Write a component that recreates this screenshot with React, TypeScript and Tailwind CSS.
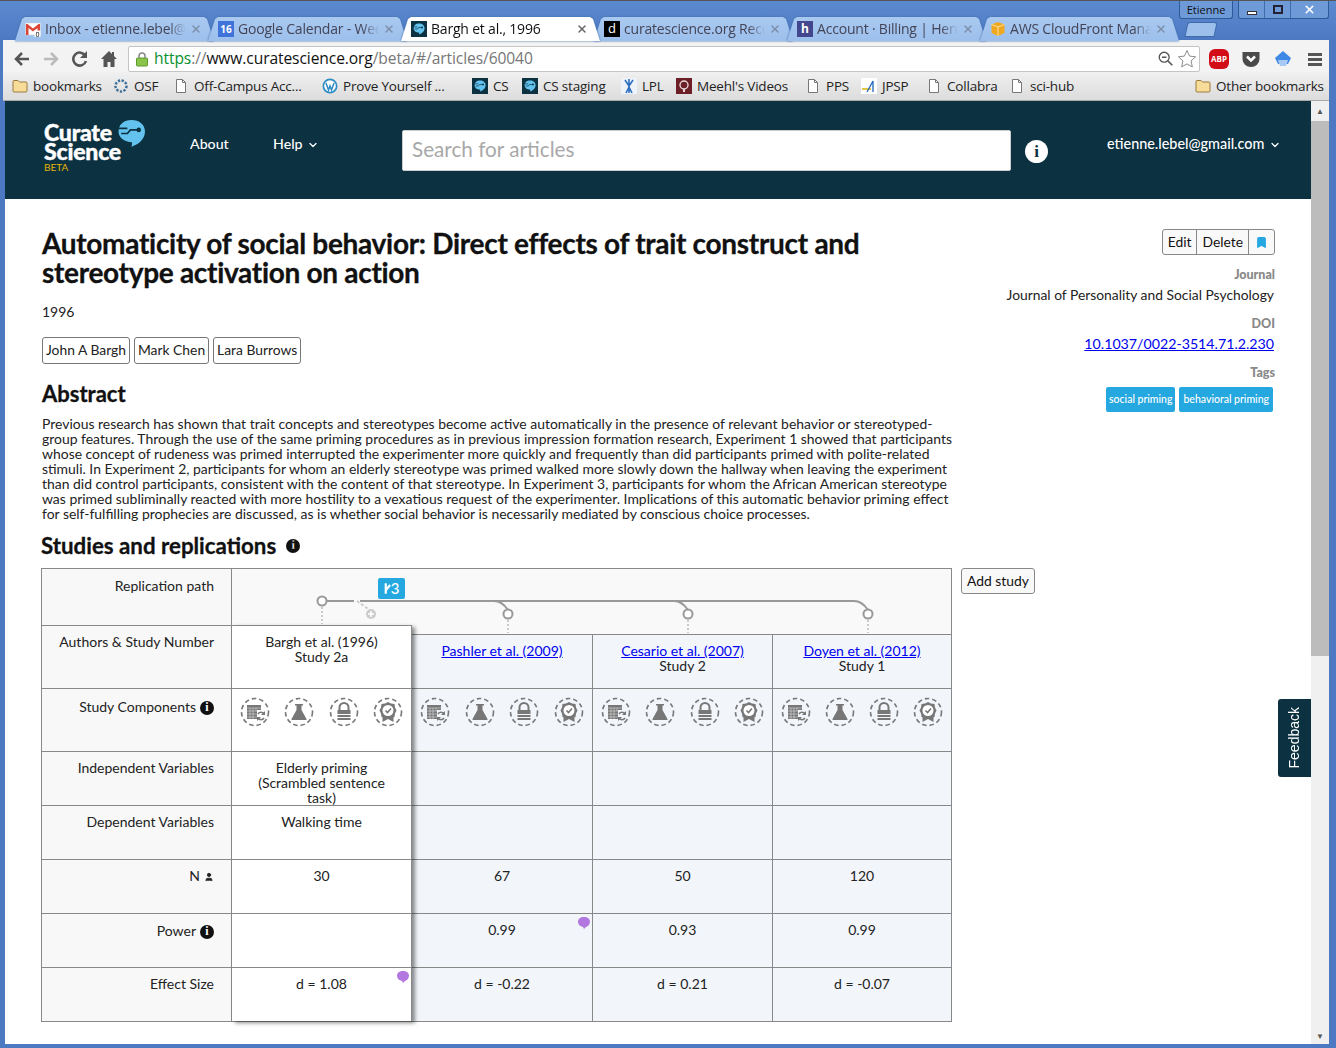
import { Bookmark, ChevronDown, User, X } from "lucide-react";

const font = "font-['Lato','Noto_Sans',sans-serif]";
const chrome = "font-['Open_Sans','Noto_Sans',sans-serif]";

function CsBubble({ className = "" }: { className?: string }) {
  return (
    <svg viewBox="0 0 28 28" className={className}>
      <path d="M14 1c7.5 0 13 4.5 13 11 0 5-3 9-7 12-1.500 1-4 2-6 3 .5-1.500.5-3 .5-4.500C7 22 1.500 18 1.500 12 1.500 5.500 6.500 1 14 1z" fill="#63c3ee" />
      <path d="M1 9h9M4 14h6l3-3.500h8" stroke="#0c3141" strokeWidth="1.600" fill="none" />
      <circle cx="21" cy="10.500" r="2.200" fill="#0c3141" />
    </svg>
  );
}

function TabIcon({ kind }: { kind: string }) {
  if (kind === "gmail")
    return (
      <svg viewBox="0 0 16 16" className="w-4 h-4 shrink-0">
        <rect x="0.500" y="2" width="15" height="12" fill="#fff" stroke="#ccc" strokeWidth="0.500" />
        <path d="M1 3v11h2.500V7L8 10.500 12.500 7v7H15V3h-1.500L8 7.500 2.500 3z" fill="#db4437" />
        <rect x="9.500" y="9.500" width="6" height="6.500" fill="#fff" />
        <text x="12.500" y="15.500" fontSize="7" textAnchor="middle" fill="#000">0</text>
      </svg>
    );
  if (kind === "cal")
    return (
      <div className="w-4 h-4 shrink-0 bg-[#3f73d9] text-white text-[10px] leading-[17px] font-bold text-center">16</div>
    );
  if (kind === "cs")
    return (
      <div className="w-4 h-4 shrink-0 bg-[#0c3141] flex items-center justify-center">
        <CsBubble className="w-3 h-3" />
      </div>
    );
  if (kind === "d")
    return <div className="w-4 h-4 shrink-0 bg-black text-white text-[13px] leading-[14px] text-center">d</div>;
  if (kind === "heroku")
    return <div className="w-4 h-4 shrink-0 bg-[#43488e] text-white text-[12px] leading-[15px] font-bold text-center">h</div>;
  return (
    <svg viewBox="0 0 16 16" className="w-4 h-4 shrink-0">
      <path d="M8 1l6.500 2.500V12L8 15l-6.500-3V3.500z" fill="#f0a91f" />
      <path d="M1.500 3.500L8 6l6.500-2.500M8 6v9" stroke="#fbe0a4" strokeWidth="1" fill="none" />
    </svg>
  );
}

const tabs = [
  { icon: "gmail", label: "Inbox - etienne.lebel@gmail.com" },
  { icon: "cal", label: "Google Calendar - Week of" },
  { icon: "cs", label: "Bargh et al., 1996", active: true },
  { icon: "d", label: "curatescience.org Records" },
  { icon: "heroku", label: "Account · Billing | Heroku" },
  { icon: "aws", label: "AWS CloudFront Management" },
];

function Tab({ icon, label, active }: { icon: string; label: string; active?: boolean }) {
  return (
    <div className={`relative w-[205px] -mr-[12px] h-[24px] shrink-0 ${active ? "z-10" : ""} [filter:drop-shadow(0_0_1px_#3f6bab)]`}>
      <div
        className={`h-full flex items-center pl-[13px] pr-[15px] gap-[4px] [clip-path:polygon(0_100%,3px_100%,10px_2px,13px_0,calc(100%-13px)_0,calc(100%-10px)_2px,calc(100%-3px)_100%,100%_100%)] ${
          active ? "bg-white text-[#111]" : "bg-gradient-to-b from-[#a9c9f0] to-[#9cbfec] text-[#445]"
        }`}
      >
        <TabIcon kind={icon} />
        <span className="flex-1 overflow-hidden whitespace-nowrap text-[14px] leading-[24px] tracking-[-0.2px] [mask-image:linear-gradient(to_right,black_88%,transparent)]">
          {label}
        </span>
        <X size={12} strokeWidth={3} className={active ? "text-[#666] shrink-0" : "text-[#7d8fa8] shrink-0"} />
      </div>
    </div>
  );
}

function DocIcon() {
  return (
    <svg viewBox="0 0 16 16" className="w-4 h-4 shrink-0">
      <path d="M3.500 1.500h6l3 3v10h-9z" fill="#fff" stroke="#777" />
      <path d="M9.500 1.500v3h3" fill="none" stroke="#777" />
    </svg>
  );
}

function FolderIcon() {
  return (
    <svg viewBox="0 0 16 16" className="w-4 h-4 shrink-0">
      <path d="M1 3.500c0-.6.4-1 1-1h4l1.500 1.500H14c.6 0 1 .4 1 1v8c0 .6-.4 1-1 1H2c-.6 0-1-.4-1-1z" fill="#f8dc9a" stroke="#9a7b3d" />
    </svg>
  );
}

function BookmarkIcon({ kind }: { kind: string }) {
  if (kind === "folder") return <FolderIcon />;
  if (kind === "doc") return <DocIcon />;
  if (kind === "cs") return <TabIcon kind="cs" />;
  if (kind === "osf")
    return (
      <svg viewBox="0 0 16 16" className="w-4 h-4 shrink-0">
        <circle cx="8" cy="8" r="5.500" fill="none" stroke="#3b6d96" strokeWidth="2.500" strokeDasharray="2.200 1.500" />
      </svg>
    );
  if (kind === "wp")
    return (
      <svg viewBox="0 0 16 16" className="w-4 h-4 shrink-0">
        <circle cx="8" cy="8" r="7.500" fill="#2d8cc4" />
        <circle cx="8" cy="8" r="5.800" fill="#fff" />
        <path d="M4 5l2.500 7L8 8l1.500 4L12 5" fill="none" stroke="#2d8cc4" strokeWidth="1.500" />
      </svg>
    );
  if (kind === "lpl")
    return (
      <svg viewBox="0 0 16 16" className="w-4 h-4 shrink-0">
        <rect width="16" height="16" fill="#eef3fa" />
        <path d="M8 1v14M4 2l4 6 4-6M5 15l3-6 3 6" stroke="#2e6fc0" strokeWidth="1.600" fill="none" />
      </svg>
    );
  if (kind === "meehl")
    return (
      <svg viewBox="0 0 16 16" className="w-4 h-4 shrink-0">
        <rect width="16" height="16" fill="#6b1f26" />
        <circle cx="8" cy="7" r="4" fill="none" stroke="#e8d6d6" strokeWidth="1.400" />
        <path d="M7 11h2v3H7z" fill="#e8d6d6" />
      </svg>
    );
  return (
    <svg viewBox="0 0 16 16" className="w-4 h-4 shrink-0">
      <rect width="16" height="16" fill="#fff" />
      <path d="M1 11h9" stroke="#e3c642" strokeWidth="2" />
      <path d="M6 14l6-11v11" stroke="#2e6fc0" strokeWidth="1.400" fill="none" />
    </svg>
  );
}

const bookmarks = [
  { icon: "folder", label: "bookmarks", width: "w-[101px]" },
  { icon: "osf", label: "OSF", width: "w-[60px]" },
  { icon: "doc", label: "Off-Campus Acc...", width: "w-[149px]" },
  { icon: "wp", label: "Prove Yourself ...", width: "w-[150px]" },
  { icon: "cs", label: "CS", width: "w-[50px]" },
  { icon: "cs", label: "CS staging", width: "w-[99px]" },
  { icon: "lpl", label: "LPL", width: "w-[55px]" },
  { icon: "meehl", label: "Meehl's Videos", width: "w-[129px]" },
  { icon: "doc", label: "PPS", width: "w-[56px]" },
  { icon: "jpsp", label: "JPSP", width: "w-[65px]" },
  { icon: "doc", label: "Collabra", width: "w-[83px]" },
  { icon: "doc", label: "sci-hub", width: "w-[186px]" },
  { icon: "folder", label: "Other bookmarks", width: "w-[130px]" },
];

function WindowChrome() {
  return (
    <div className={`${chrome} shrink-0`}>
      {/* Tab strip */}
      <div className="relative h-[40px] pt-[16px] pl-[12px] flex bg-gradient-to-b from-[#5c8ad0] to-[#4d79c2] border-t border-[#555]">
        {tabs.map((t) => (
          <Tab key={t.label} {...t} />
        ))}
        <div className="ml-[16px] mt-[5px] w-[30px] h-[15px] bg-[#9cbfec] border border-[#3f6bab] rounded-t-[3px] -skew-x-12" />
        {/* Window controls */}
        <div className="absolute top-0 right-[7px] flex items-start gap-[5px]">
          <div className="w-[54px] h-[18px] border border-t-0 border-[#2f5a98] rounded-b-[3px] bg-[#6e9ad8] text-[11px] leading-[18px] text-[#111] text-center">
            Etienne
          </div>
          <div className="w-[91px] h-[18px] border border-t-0 border-[#2f5a98] rounded-b-[3px] bg-[#6e9ad8] flex">
            <div className="w-[26px] flex items-center justify-center border-r border-[#3f6bab]">
              <div className="w-[10px] h-[4px] mt-[6px] bg-white border border-[#333]" />
            </div>
            <div className="w-[26px] flex items-center justify-center border-r border-[#3f6bab]">
              <div className="w-[10px] h-[9px] bg-transparent border-2 border-[#223]" />
            </div>
            <div className="flex-1 flex items-center justify-center">
              <X size={13} strokeWidth={3} className="text-white" />
            </div>
          </div>
        </div>
      </div>
      {/* Toolbar */}
      <div className="h-[32px] pt-[6px] ml-[3px] mr-[7px] bg-[#f3f3f3] flex items-center">
        <div className="w-[125px] pl-[9px] flex items-center gap-[9px] text-[#555]">
          <svg viewBox="0 0 20 20" className="w-5 h-5">
            <path d="M17 10H5M10 4l-6 6 6 6" stroke="#555" strokeWidth="2.500" fill="none" />
          </svg>
          <svg viewBox="0 0 20 20" className="w-5 h-5">
            <path d="M3 10h12M10 4l6 6-6 6" stroke="#bbb" strokeWidth="2.500" fill="none" />
          </svg>
          <svg viewBox="0 0 20 20" className="w-5 h-5">
            <path d="M15.500 7A6.500 6.500 0 1 0 16 12" stroke="#555" strokeWidth="2.500" fill="none" />
            <path d="M17 2v7h-7z" fill="#555" />
          </svg>
          <svg viewBox="0 0 20 20" className="w-5 h-5">
            <path d="M10 2L2 10h2.500v8h4v-5h3v5h4v-8H18l-3-3V3h-2v2z" fill="#555" />
          </svg>
        </div>
        <div className="w-[1072px] h-[26px] bg-white border border-[#c4c4c4] rounded-[2px] flex items-center pl-[5px] pr-[2px]">
          <svg viewBox="0 0 16 16" className="w-4 h-4 shrink-0">
            <rect x="2.500" y="7" width="11" height="8" rx="1" fill="#8ac44b" stroke="#5f9a2d" />
            <path d="M5 7V5a3 3 0 0 1 6 0v2" stroke="#888" strokeWidth="1.500" fill="none" />
          </svg>
          <div className="ml-[4px] flex-1 text-[15.6px] tracking-[-0.1px] whitespace-nowrap">
            <span className="text-[#0a8f2f]">https</span>
            <span className="text-[#777]">://</span>
            <span className="text-[#111]">www.curatescience.org</span>
            <span className="text-[#777]">/beta/#/articles/60040</span>
          </div>
          <svg viewBox="0 0 20 20" className="w-[18px] h-[18px] shrink-0">
            <circle cx="8" cy="8" r="5.500" stroke="#555" strokeWidth="1.500" fill="none" />
            <path d="M5.500 8h5M12 12l5 5" stroke="#555" strokeWidth="1.800" />
          </svg>
          <svg viewBox="0 0 20 20" className="w-5 h-5 ml-[2px] shrink-0">
            <path d="M10 1.500l2.600 5.600 6 .7-4.500 4.100 1.200 6-5.300-3-5.300 3 1.200-6L1.400 7.800l6-.7z" stroke="#8c8c8c" fill="#fff" />
          </svg>
        </div>
        <div className="flex-1 flex items-center pl-[9px] gap-[12px]">
          <div className="w-5 h-5 rounded-[6px] bg-[#d20d17] text-white text-[8px] font-bold leading-[20px] text-center">ABP</div>
          <svg viewBox="0 0 20 20" className="w-5 h-5">
            <path d="M1.500 3h17v7a8.500 8 0 0 1-17 0z" fill="#4a4a4a" />
            <path d="M6 7.500l4 4 4-4" stroke="#fff" strokeWidth="2.500" fill="none" />
          </svg>
          <svg viewBox="0 0 20 20" className="w-5 h-5">
            <path d="M10 2l8 7-3 6H5L2 9z" fill="#3f88e6" />
            <path d="M5 11h10l-2 6H7z" fill="#a9c9f5" />
          </svg>
          <div className="ml-[3px] w-[14px] flex flex-col gap-[2px]">
            <div className="h-[3px] bg-[#555]" />
            <div className="h-[3px] bg-[#555]" />
            <div className="h-[3px] bg-[#555]" />
          </div>
        </div>
      </div>
      {/* Bookmarks */}
      <div className="h-[29px] ml-[3px] mr-[7px] pl-[9px] bg-gradient-to-b from-[#f0f0f0] to-[#dcdcdc] flex items-center text-[13.5px] text-[#222] border-b border-[#aaa] tracking-[-0.2px]">
        {bookmarks.map((b) => (
          <div key={b.label} className={`${b.width} shrink-0 flex items-center gap-[5px] whitespace-nowrap`}>
            <BookmarkIcon kind={b.icon} />
            <span>{b.label}</span>
          </div>
        ))}
      </div>
    </div>
  );
}

function NavBar() {
  return (
    <header className="h-[98px] bg-[#0c3141] text-white flex items-start pl-[39px] shrink-0">
      <div className="relative w-[146px] h-[90px] pt-[22px]">
        <div className="text-[23px] font-black leading-[19px] tracking-[-0.2px] [-webkit-text-stroke:0.4px_white]">Curate</div>
        <div className="text-[23px] font-black leading-[19px] tracking-[-0.2px] [-webkit-text-stroke:0.4px_white]">Science</div>
        <div className="mt-[1px] text-[10px] leading-[10px] text-[#e3b505]">BETA</div>
        <CsBubble className="absolute left-[73px] top-[18px] w-[29px] h-[29px]" />
      </div>
      <div className="w-[83px] pt-[32px] text-[14.2px] font-medium">About</div>
      <div className="w-[129px] pt-[32px] text-[14.2px] font-medium flex items-start gap-[4px]">
        Help <ChevronDown size={12} strokeWidth={2.500} className="mt-[6px]" />
      </div>
      <div className="mt-[29px] w-[609px] h-[41px] bg-white rounded-[2px] border border-[#ccc] pl-[9px] text-[20.7px] leading-[37px] text-[#a8a8a8]">
        Search for articles
      </div>
      <div className="ml-[14px] mt-[39px] w-[23px] h-[23px] rounded-full bg-white text-[#0c3141] flex items-center justify-center text-[17px] font-black font-['Liberation_Serif',serif]">
        i
      </div>
      <div className="ml-[59px] pt-[32px] text-[14.4px] font-medium flex items-start gap-[5px] whitespace-nowrap">
        etienne.lebel@gmail.com <ChevronDown size={12} strokeWidth={2.500} className="mt-[6px]" />
      </div>
    </header>
  );
}

function RoundInfo() {
  return (
    <span className="inline-flex w-[14px] h-[14px] rounded-full bg-[#111] text-white text-[12px] font-black items-center justify-center font-['Liberation_Serif',serif] align-[1px]">
      i
    </span>
  );
}

function ComponentIcons() {
  const ring = "w-[30px] h-[30px]";
  const dash = { fill: "none", stroke: "#777", strokeWidth: 1.600, strokeDasharray: "4.500 3" };
  return (
    <div className="flex justify-between px-[8px] pt-[8px] w-full">
      <svg viewBox="0 0 30 30" className={ring}>
        <circle cx="15" cy="15" r="13.500" {...dash} />
        <path d="M7 8h14v5h-4v9H7z" fill="#777" />
        <path d="M10 11v11M13 11v11M16 11v3M7 11h14M7 14h10M7 17h10M7 20h10" stroke="#ddd" strokeWidth="0.600" />
        <path d="M18 17a3.500 3.500 0 0 1 6 0M24 21a3.500 3.500 0 0 1-6 0" stroke="#777" strokeWidth="1.500" fill="none" />
        <path d="M25 14v4h-4zM17 24v-4h4z" fill="#777" />
      </svg>
      <svg viewBox="0 0 30 30" className={ring}>
        <circle cx="15" cy="15" r="13.500" {...dash} />
        <path d="M11 7h8v1.500h-1.500V13l5 9v1h-15v-1l5-9V8.500H11z" fill="#777" />
      </svg>
      <svg viewBox="0 0 30 30" className={ring}>
        <circle cx="15" cy="15" r="13.500" {...dash} />
        <path d="M10.500 13v-2.500a4.500 4.500 0 0 1 9 0V13" stroke="#777" strokeWidth="2" fill="none" />
        <path d="M8.500 13h13v4h-13zM8.500 18h13v2h-13zM8.500 21h13v2h-13z" fill="#777" />
      </svg>
      <svg viewBox="0 0 30 30" className={ring}>
        <circle cx="15" cy="15" r="13.500" {...dash} />
        <path d="M15 5l3 1.500 3.500.5.500 3.500 1.500 3-1.500 3-.5 3.500-1 .2V25l-5.500-3-5.500 3v-4.800l-1-.2-.5-3.500L6.500 13.500l1.500-3 .5-3.500L12 6.500z" fill="#777" />
        <circle cx="15" cy="13.500" r="5.500" fill="#fff" />
        <path d="M12.500 13.500l2 2 3.500-4" stroke="#777" strokeWidth="1.600" fill="none" />
      </svg>
    </div>
  );
}

function Note({ className }: { className: string }) {
  return (
    <svg viewBox="0 0 14 14" className={`absolute w-[14px] h-[14px] ${className}`}>
      <path d="M7 1c3.500 0 6 1.800 6 4.800 0 2.600-2 4.700-4 5.200L7 13l-1-2C3 10.500 1 8.500 1 5.800 1 2.800 3.500 1 7 1z" fill="#b377e0" />
    </svg>
  );
}

const leftRows = [
  { label: "Replication path", h: "h-[56px] pt-[9px]" },
  { label: "Authors & Study Number", h: "h-[63px] pt-[8px]" },
  { label: "Study Components", h: "h-[63px] pt-[10px]", info: true },
  { label: "Independent Variables", h: "h-[54px] pt-[8px]" },
  { label: "Dependent Variables", h: "h-[54px] pt-[8px]" },
  { label: "N", h: "h-[54px] pt-[8px]", user: true },
  { label: "Power", h: "h-[54px] pt-[9px]", info: true },
  { label: "Effect Size", h: "h-[54px] pt-[8px]" },
];

const studies = [
  { name: "Pashler et al. (2009)", study: "", n: "67", power: "0.99", d: "d = -0.22", note: true, w: "w-[180px]" },
  { name: "Cesario et al. (2007)", study: "Study 2", n: "50", power: "0.93", d: "d = 0.21", w: "w-[180px]" },
  { name: "Doyen et al. (2012)", study: "Study 1", n: "120", power: "0.99", d: "d = -0.07", w: "w-[179px]" },
];

function StudiesTable() {
  return (
    <div className="relative -ml-[1px] w-[911px] shrink-0 border border-[#888] flex text-[14px] text-[#222] leading-[15px]">
      {/* Label column */}
      <div className="w-[190px] shrink-0 border-r border-[#888] bg-[#f8f8f8]">
        {leftRows.map((r, i) => (
          <div key={r.label} className={`${r.h} ${i ? "border-t border-[#888]" : ""} text-right pr-[17px]`}>
            {r.label}
            {r.info && <span className="ml-[4px]"><RoundInfo /></span>}
            {r.user && <User size={10} fill="#222" className="inline ml-[4px]" />}
          </div>
        ))}
      </div>
      {/* Original study column, raised over the replications */}
      <div className="w-[180px] shrink-0 flex flex-col">
        <div className="h-[56px] bg-[#f9f9f9]" />
        <div className="flex-1 relative z-10 bg-white border-r border-t border-[#888] shadow-[3px_2px_4px_rgba(0,0,0,0.45)]">
          <div className="h-[62px] text-center pt-[8px]">
            Bargh et al. (1996)
            <br />
            Study 2a
          </div>
          <div className="h-[63px] border-t border-[#888]">
            <ComponentIcons />
          </div>
          <div className="h-[54px] border-t border-[#888] text-center pt-[8px] px-[20px]">
            Elderly priming (Scrambled sentence task)
          </div>
          <div className="h-[54px] border-t border-[#888] text-center pt-[8px]">Walking time</div>
          <div className="h-[54px] border-t border-[#888] text-center pt-[8px]">30</div>
          <div className="h-[54px] border-t border-[#888]" />
          <div className="relative h-[54px] border-t border-[#888] text-center pt-[8px]">
            d = 1.08
            <Note className="right-[1px] top-[2px]" />
          </div>
        </div>
      </div>
      {/* Replications */}
      {studies.map((s, i) => {
        const cell = `border-t border-[#888] bg-[#f2f6fb] text-center relative ${i ? "border-l" : ""}`;
        return (
          <div key={s.name} className={`${s.w} shrink-0 flex flex-col`}>
            <div className="h-[65px] bg-[#f9f9f9]" />
            <div className={`${cell} h-[54px] pt-[8px]`}>
              <span className="text-[#0000ee] underline">{s.name}</span>
              <br />
              {s.study}
            </div>
            <div className={`${cell} h-[63px]`}>
              <ComponentIcons />
            </div>
            <div className={`${cell} h-[54px]`} />
            <div className={`${cell} h-[54px]`} />
            <div className={`${cell} h-[54px] pt-[8px]`}>{s.n}</div>
            <div className={`${cell} h-[54px] pt-[8px]`}>
              {s.power}
              {s.note && <Note className="right-[1px] top-[2px]" />}
            </div>
            <div className={`${cell} h-[54px] pt-[8px]`}>{s.d}</div>
          </div>
        );
      })}
      {/* Replication path drawing lies over the header cells */}
      <svg className="absolute left-[190px] top-0 z-20 pointer-events-none" width="719" height="66" viewBox="0 0 719 66">
        <path d="M90 32H122M128 32H622Q630 32 636 41M262 32Q270 32 276 41M442 32Q450 32 456 41" stroke="#999" strokeWidth="2" fill="none" />
        <path d="M125 32l14 10" stroke="#ccc" strokeWidth="2" strokeDasharray="3 2" fill="none" />
        <path d="M90 38v17M276 51v13M456 51v13M636 51v13" stroke="#bbb" strokeWidth="1.500" strokeDasharray="2 2" fill="none" />
        <circle cx="90" cy="32" r="4.500" fill="#fff" stroke="#999" strokeWidth="2" />
        <circle cx="276" cy="45" r="4.500" fill="#fff" stroke="#999" strokeWidth="2" />
        <circle cx="456" cy="45" r="4.500" fill="#fff" stroke="#999" strokeWidth="2" />
        <circle cx="636" cy="45" r="4.500" fill="#fff" stroke="#999" strokeWidth="2" />
        <circle cx="139" cy="45" r="5" fill="#ccc" />
        <path d="M136 45h6M139 42v6" stroke="#fff" strokeWidth="1.500" />
      </svg>
      {/* Replication count badge */}
      <div className="absolute left-[336px] top-[9px] z-20 w-[27px] h-[21px] bg-[#25a7e0] rounded-[2px] text-white text-[15px] leading-[21px] font-medium flex items-center justify-center">
        <svg viewBox="0 0 8 14" className="w-[7px] h-[13px]">
          <path d="M2 1v12M2 9l5-6" stroke="#fff" strokeWidth="2.500" fill="none" />
        </svg>
        3
      </div>
    </div>
  );
}

const sideLabel = "text-[12.5px] leading-[14px] font-black text-[#888]";

export default function App() {
  return (
    <div className={`w-[1336px] h-[1048px] overflow-hidden flex flex-col bg-[#4d79c2] ${font}`}>
      <WindowChrome />
      <div className="flex-1 min-h-0 flex pl-[5px] pr-[7px] pb-[4px]">
        <div className="relative w-[1306px] bg-white flex flex-col overflow-hidden">
          <NavBar />
          <main className="flex-1 relative pl-[37px] pr-[36px] text-[#222]">
            <div className="flex justify-between">
              <div className="w-[912px] pt-[30px]">
                <h1 className="text-[28px] leading-[29px] font-bold text-[#111] tracking-[-0.3px] [-webkit-text-stroke:0.3px_#111]">
                  Automaticity of social behavior: Direct effects of trait construct and stereotype activation on action
                </h1>
                <div className="mt-[16px] text-[14px] leading-[18px]">1996</div>
                <div className="mt-[16px] flex gap-[4px] text-[13.85px] leading-[23px]">
                  {["John A Bargh", "Mark Chen", "Lara Burrows"].map((a) => (
                    <div key={a} className="h-[27px] px-[3px] border border-[#777] rounded-[3px]">
                      {a}
                    </div>
                  ))}
                </div>
                <h2 className="mt-[16px] text-[22px] leading-[27px] font-bold text-[#111] [-webkit-text-stroke:0.3px_#111]">Abstract</h2>
                <p className="mt-[9px] text-[13.94px] leading-[15px]">
                  Previous research has shown that trait concepts and stereotypes become active automatically in the presence of relevant behavior or stereotyped-group features. Through the use of the same priming procedures as in previous impression formation research, Experiment 1 showed that participants whose concept of rudeness was primed interrupted the experimenter more quickly and frequently than did participants primed with polite-related stimuli. In Experiment 2, participants for whom an elderly stereotype was primed walked more slowly down the hallway when leaving the experiment than did control participants, consistent with the content of that stereotype. In Experiment 3, participants for whom the African American stereotype was primed subliminally reacted with more hostility to a vexatious request of the experimenter. Implications of this automatic behavior priming effect for self-fulfilling prophecies are discussed, as is whether social behavior is necessarily mediated by conscious choice processes.
                </p>
              </div>
              <aside className="w-[300px] pt-[30px] text-right text-[13.85px]">
                <div className="flex justify-end">
                  <div className="h-[26px] flex border border-[#888] rounded-[3px] bg-[#f9f9f9] leading-[24px] text-[#111]">
                    <span className="px-[5px] border-r border-[#888]">Edit</span>
                    <span className="px-[5px] border-r border-[#888]">Delete</span>
                    <span className="w-[25px] flex items-center justify-center">
                      <Bookmark size={13} fill="#25a7e0" stroke="#25a7e0" />
                    </span>
                  </div>
                </div>
                <div className={`mt-[13px] ${sideLabel}`}>Journal</div>
                <div className="mt-[4px] pr-[1px] leading-[18px]">Journal of Personality and Social Psychology</div>
                <div className={`mt-[13px] ${sideLabel}`}>DOI</div>
                <div className="mt-[4px] pr-[1px] leading-[18px] text-[14.2px] text-[#0000ee] underline">10.1037/0022-3514.71.2.230</div>
                <div className={`mt-[13px] ${sideLabel}`}>Tags</div>
                <div className="mt-[7px] flex justify-end gap-[4px] pr-[2px] text-[10.5px] font-medium leading-[25px] text-white">
                  <span className="px-[3px] rounded-[2px] bg-[#25a7e0]">social priming</span>
                  <span className="px-[4px] rounded-[2px] bg-[#25a7e0]">behavioral priming</span>
                </div>
              </aside>
            </div>
            <h2 className="mt-[11px] -ml-[1px] text-[22.3px] leading-[27px] font-bold text-[#111] flex items-center gap-[10px] [-webkit-text-stroke:0.3px_#111]">
              Studies and replications <RoundInfo />
            </h2>
            <div className="mt-[9px] flex items-start gap-[9px]">
              <StudiesTable />
              <div className="h-[26px] px-[5px] border border-[#888] rounded-[3px] text-[13.85px] leading-[24px] bg-[#f9f9f9] text-[#111]">
                Add study
              </div>
            </div>
          </main>
          <div className="absolute right-0 top-[598px] w-[33px] h-[78px] bg-[#0c3141] rounded-l-[3px] text-white flex items-center justify-center">
            <span className="[writing-mode:vertical-rl] rotate-180 text-[14px] font-['Liberation_Sans',sans-serif]">Feedback</span>
          </div>
        </div>
        {/* Scrollbar */}
        <div className="w-[18px] bg-[#f0f0f0] flex flex-col items-center">
          <div className="h-[20px] shrink-0 flex items-center justify-center text-[#555] text-[8px]">▲</div>
          <div className="w-full h-[535px] bg-[#bcbcbc]" />
          <div className="flex-1" />
          <div className="h-[17px] shrink-0 flex items-center justify-center text-[#555] text-[8px]">▼</div>
        </div>
      </div>
    </div>
  );
}
